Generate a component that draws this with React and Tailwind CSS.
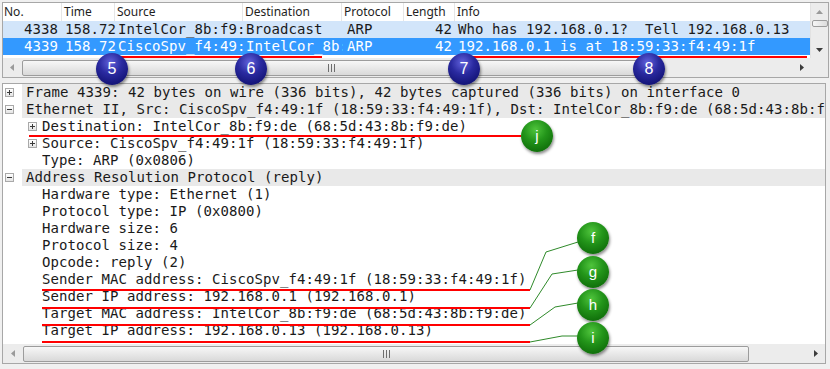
import React from "react";

const MONO = "font-['DejaVu_Sans_Mono',monospace] text-[14px] tracking-[0.07px] leading-[17px]";

function Box({ minus }) {
  return (
    <span className="relative inline-block w-[9px] h-[9px] border border-[#a9a9a9] bg-gradient-to-b from-white to-[#e4e4e4] shrink-0">
      <span className="absolute left-[1px] top-[3px] w-[5px] h-px bg-[#3a3a3a]" />
      {!minus && <span className="absolute left-[3px] top-[1px] w-px h-[5px] bg-[#3a3a3a]" />}
    </span>
  );
}

function Grip() {
  return (
    <svg width="7" height="8" viewBox="0 0 7 8" className="block">
      <rect x="0" y="0" width="1" height="8" fill="#6e6e6e" />
      <rect x="3" y="0" width="1" height="8" fill="#6e6e6e" />
      <rect x="6" y="0" width="1" height="8" fill="#6e6e6e" />
    </svg>
  );
}

function ArrowL({ color }) {
  return (
    <svg width="4" height="7" viewBox="0 0 4 7" className="block">
      <polygon points="4,0 0,3.5 4,7" fill={color} />
    </svg>
  );
}
function ArrowR({ color }) {
  return (
    <svg width="4" height="7" viewBox="0 0 4 7" className="block">
      <polygon points="0,0 4,3.5 0,7" fill={color} />
    </svg>
  );
}
function ArrowU({ color }) {
  return (
    <svg width="7" height="4" viewBox="0 0 7 4" className="block">
      <polygon points="0,4 3.5,0 7,4" fill={color} />
    </svg>
  );
}
function ArrowD({ color }) {
  return (
    <svg width="7" height="4" viewBox="0 0 7 4" className="block">
      <polygon points="0,0 3.5,4 7,0" fill={color} />
    </svg>
  );
}

const packets = [
  {
    no: "4338",
    time: "158.72",
    src: "IntelCor_8b:f9:de",
    dst: "Broadcast",
    proto: "ARP",
    len: "42",
    info: "Who has 192.168.0.1?  Tell 192.168.0.13",
    row: "bg-[#d2e5fa] text-[#1a1a1a]",
  },
  {
    no: "4339",
    time: "158.72",
    src: "CiscoSpv_f4:49:1f",
    dst: "IntelCor_8b:f9:de",
    proto: "ARP",
    len: "42",
    info: "192.168.0.1 is at 18:59:33:f4:49:1f",
    row: "bg-[#3399ff] text-white",
  },
  {
    no: "4340",
    time: "165.13",
    src: "192.168.0.13",
    dst: "192.168.0.1",
    proto: "ICMP",
    len: "74",
    info: "Echo (ping) request  id=0x0001, seq=18/4608",
    row: "bg-white text-[#1a1a1a]",
  },
];

const tree = [
  { lvl: 0, exp: "+", text: "Frame 4339: 42 bytes on wire (336 bits), 42 bytes captured (336 bits) on interface 0" },
  { lvl: 0, exp: "-", text: "Ethernet II, Src: CiscoSpv_f4:49:1f (18:59:33:f4:49:1f), Dst: IntelCor_8b:f9:de (68:5d:43:8b:f9:de)" },
  { lvl: 1, exp: "+", text: "Destination: IntelCor_8b:f9:de (68:5d:43:8b:f9:de)" },
  { lvl: 1, exp: "+", text: "Source: CiscoSpv_f4:49:1f (18:59:33:f4:49:1f)" },
  { lvl: 1, text: "Type: ARP (0x0806)" },
  { lvl: 0, exp: "-", text: "Address Resolution Protocol (reply)" },
  { lvl: 1, text: "Hardware type: Ethernet (1)" },
  { lvl: 1, text: "Protocol type: IP (0x0800)" },
  { lvl: 1, text: "Hardware size: 6" },
  { lvl: 1, text: "Protocol size: 4" },
  { lvl: 1, text: "Opcode: reply (2)" },
  { lvl: 1, text: "Sender MAC address: CiscoSpv_f4:49:1f (18:59:33:f4:49:1f)" },
  { lvl: 1, text: "Sender IP address: 192.168.0.1 (192.168.0.1)" },
  { lvl: 1, text: "Target MAC address: IntelCor_8b:f9:de (68:5d:43:8b:f9:de)" },
  { lvl: 1, text: "Target IP address: 192.168.0.13 (192.168.0.13)" },
];

const BLUE =
  "bg-[radial-gradient(circle_at_45%_30%,#6262dc_0%,#2a2aa0_40%,#15157a_75%,#0b0b4c_100%)] text-[16px]";
const GREEN =
  "bg-[radial-gradient(circle_at_45%_30%,#4fc43c_0%,#23951a_40%,#12730c_75%,#0a4d06_100%)] text-[15px]";

function Circle({ pos, color, label }) {
  return (
    <div
      className={`absolute w-[32px] h-[32px] rounded-full flex items-center justify-center text-white font-['Liberation_Sans',sans-serif] shadow-[1px_2px_3px_rgba(0,0,0,0.45)] ${color} ${pos}`}
    >
      {label}
    </div>
  );
}

export default function App() {
  return (
    <div className="relative w-[830px] h-[369px] overflow-hidden bg-[#f0f0f0]">
      {/* Packet list pane */}
      <div className="ml-[2px] mt-[2px] w-[827px] h-[76px] border border-[#a7a7a7] bg-white flex flex-col">
        <div className="flex h-[55px]">
          <div className="flex-1 overflow-hidden flex flex-col">
            {/* header */}
            <div className="flex h-[18px] shrink-0 items-center font-['Noto_Sans',sans-serif] text-[12px] leading-[18px] text-[#1e1e1e] bg-white">
              <div className="w-[59px] pl-[1px] border-r border-[#e6e6e6] h-full">No.</div>
              <div className="w-[53px] pl-[2px] border-r border-[#e6e6e6] h-full">Time</div>
              <div className="w-[128px] pl-[2px] border-r border-[#e6e6e6] h-full">Source</div>
              <div className="w-[99px] pl-[2px] border-r border-[#e6e6e6] h-full">Destination</div>
              <div className="w-[62px] pl-[2px] border-r border-[#e6e6e6] h-full">Protocol</div>
              <div className="w-[51px] pl-[2px] border-r border-[#e6e6e6] h-full">Length</div>
              <div className="flex-1 pl-[2px] h-full">Info</div>
            </div>
            {packets.map((p) => (
              <div key={p.no} className={`flex h-[17px] shrink-0 whitespace-pre ${MONO} ${p.row}`}>
                <div className="w-[59px] text-right pr-[4px] overflow-hidden">{p.no}</div>
                <div className="w-[54px] text-right overflow-hidden">{p.time}</div>
                <div className="w-[130px] pl-[2px] overflow-hidden">{p.src}</div>
                <div className="w-[97px] overflow-hidden">{p.dst}</div>
                <div className="w-[61px] pl-[4px] overflow-hidden">{p.proto}</div>
                <div className="w-[51px] text-right pr-[3px] overflow-hidden">{p.len}</div>
                <div className="flex-1 pl-[3px] overflow-hidden">{p.info}</div>
              </div>
            ))}
          </div>
          {/* vertical scrollbar */}
          <div className="w-[18px] bg-[#ececec] border-l border-[#e2e2e2] flex flex-col items-center">
            <div className="h-[17px] w-full flex items-center justify-center">
              <ArrowU color="#9a9a9a" />
            </div>
            <div className="w-[16px] h-[7px] rounded-[2px] border border-[#9c9c9c] bg-gradient-to-r from-[#f6f6f6] to-[#dcdcdc]" />
            <div className="flex-1" />
            <div className="h-[17px] w-full flex items-center justify-center">
              <ArrowD color="#3c3c3c" />
            </div>
          </div>
        </div>
        {/* horizontal scrollbar */}
        <div className="flex h-[19px]">
          <div className="flex-1 flex items-center bg-[#ececec]">
            <div className="w-[17px] h-full flex items-center justify-center">
              <ArrowL color="#9a9a9a" />
            </div>
            <div className="ml-[2px] w-[618px] h-[16px] rounded-[2px] border border-[#9c9c9c] bg-gradient-to-b from-[#f7f7f7] to-[#d9d9d9] flex items-center justify-center">
              <Grip />
            </div>
            <div className="flex-1" />
            <div className="w-[17px] h-full flex items-center justify-center">
              <ArrowR color="#3c3c3c" />
            </div>
          </div>
          <div className="w-[18px] bg-[#ececec]" />
        </div>
      </div>

      {/* Packet details pane */}
      <div className="ml-[2px] mt-[5px] w-[824px] h-[281px] border border-[#a7a7a7] bg-white flex flex-col">
        <div className={`h-[260px] overflow-hidden text-[#1a1a1a] ${MONO}`}>
          {tree.map((r, i) =>
            r.lvl === 0 ? (
              <div key={i} className="flex h-[17px] items-center">
                <div className="w-[19px] pl-[2px] flex items-center">
                  <Box minus={r.exp === "-"} />
                </div>
                <div className="flex-1 h-full bg-[#e9e9e9] pl-[4px] whitespace-pre overflow-hidden">{r.text}</div>
              </div>
            ) : (
              <div key={i} className="flex h-[17px] items-center">
                <div className="w-[39px] pl-[25px] flex items-center">{r.exp && <Box minus={r.exp === "-"} />}</div>
                <div className="flex-1 whitespace-pre overflow-hidden">{r.text}</div>
              </div>
            )
          )}
        </div>
        <div className="flex h-[19px] items-center bg-[#ececec]">
          <div className="w-[19px] h-full flex items-center justify-center">
            <ArrowL color="#9a9a9a" />
          </div>
          <div className="ml-[1px] w-[726px] h-[16px] rounded-[2px] border border-[#9c9c9c] bg-gradient-to-b from-[#f7f7f7] to-[#d9d9d9] flex items-center justify-center">
            <Grip />
          </div>
          <div className="flex-1" />
          <div className="w-[18px] h-full flex items-center justify-center">
            <ArrowR color="#3c3c3c" />
          </div>
        </div>
      </div>

      {/* annotation lines */}
      <svg className="absolute left-0 top-0 pointer-events-none" width="830" height="369" viewBox="0 0 830 369">
        <g stroke="#ff0000" strokeWidth="2" fill="none">
          <line x1="118" y1="57" x2="322" y2="57" />
          <line x1="456" y1="57" x2="807" y2="57" />
          <line x1="29" y1="136" x2="521" y2="136" />
          <line x1="42" y1="290" x2="530" y2="290" />
          <line x1="42" y1="308" x2="530" y2="308" />
          <line x1="42" y1="325" x2="530" y2="325" />
          <line x1="42" y1="342" x2="530" y2="342" />
        </g>
        <g stroke="#2f8a2a" strokeWidth="1" fill="none">
          <polyline points="530,290 546,252 578,242" />
          <polyline points="530,308 552,274 578,270" />
          <polyline points="530,325 555,307 578,303" />
          <polyline points="530,342 562,336 578,336" />
        </g>
      </svg>

      <Circle pos="left-[96px] top-[53px]" color={BLUE} label="5" />
      <Circle pos="left-[235px] top-[53px]" color={BLUE} label="6" />
      <Circle pos="left-[448px] top-[53px]" color={BLUE} label="7" />
      <Circle pos="left-[633px] top-[53px]" color={BLUE} label="8" />

      <Circle pos="left-[521px] top-[120px]" color={GREEN} label="j" />
      <Circle pos="left-[577px] top-[222px]" color={GREEN} label="f" />
      <Circle pos="left-[577px] top-[256px]" color={GREEN} label="g" />
      <Circle pos="left-[577px] top-[289px]" color={GREEN} label="h" />
      <Circle pos="left-[577px] top-[322px]" color={GREEN} label="i" />
    </div>
  );
}
